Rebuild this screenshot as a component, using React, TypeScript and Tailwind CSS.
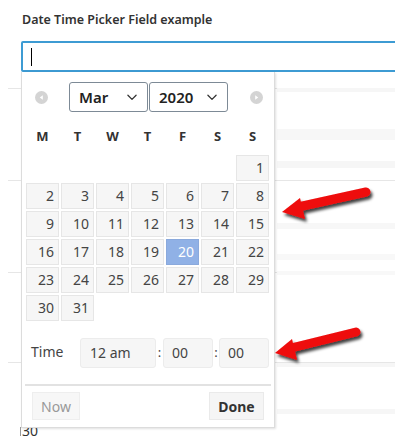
import React from "react";

const rows: (number | null)[][] = [
  [null, null, null, null, null, null, 1],
  [2, 3, 4, 5, 6, 7, 8],
  [9, 10, 11, 12, 13, 14, 15],
  [16, 17, 18, 19, 20, 21, 22],
  [23, 24, 25, 26, 27, 28, 29],
  [30, 31, null, null, null, null, null],
];

function Chevron() {
  return (
    <svg width="14" height="14" viewBox="0 0 24 24" fill="none" stroke="#333" strokeWidth="2.2" strokeLinecap="round" strokeLinejoin="round">
      <path d="M5 9l7 7 7-7" />
    </svg>
  );
}

function NavCircle({ dir }: { dir: "l" | "r" }) {
  return (
    <div className="w-[13px] h-[13px] rounded-full bg-[#d4d4d4] flex items-center justify-center">
      <svg width="7" height="7" viewBox="0 0 8 8">
        {dir === "l" ? <path d="M5.5 1.5 L2 4 L5.5 6.5 Z" fill="#fff" /> : <path d="M2.5 1.5 L6 4 L2.5 6.5 Z" fill="#fff" />}
      </svg>
    </div>
  );
}

export default function App() {
  return (
    <div className="relative w-[395px] h-[436px] overflow-hidden bg-white text-[#333]" style={{ fontFamily: '"Noto Sans", "Open Sans", Arial, sans-serif' }}>
      <div className="pt-[11px] pl-[22px] text-[12.5px] font-semibold text-[#333] h-[41px]">Date Time Picker Field example</div>
      <div className="ml-[21px] w-[380px] h-[31px] border-2 border-[#3d9bd3] rounded-[2px] flex items-center pl-[8px]">
        <div className="w-[1px] h-[18px] bg-black" />
      </div>

      {/* background content */}
      <div className="relative">
        <div className="h-[16px]" />
        <div className="ml-[8px] h-[92px] border-t border-[#e6e6e6]" />
        <div className="ml-[8px] h-[92px] border-t border-[#e6e6e6]" />
        <div className="ml-[8px] h-[90px] border-t border-[#e6e6e6]" />
        <div className="ml-[8px] h-[60px] border-t border-[#e6e6e6]" />
        <div className="absolute left-[277px] right-0 top-[16px] h-[4px] bg-[#f6f6f6]" />
        <div className="absolute left-[277px] right-0 top-[57px] h-[11px] bg-[#f7f7f7]" />
        <div className="absolute left-[277px] right-0 top-[89px] h-[7px] bg-[#f6f6f6]" />
        <div className="absolute left-[277px] right-0 top-[151px] h-[6px] bg-[#f7f7f7]" />
        <div className="absolute left-[277px] right-0 top-[182px] h-[6px] bg-[#f8f8f8]" />
        <div className="absolute left-[277px] right-0 top-[199px] h-[4px] bg-[#f8f8f8]" />
        <div className="absolute left-[277px] right-0 top-[291px] h-[4px] bg-[#f6f6f6]" />
        <div className="absolute left-[277px] right-0 top-[337px] h-[5px] bg-[#f6f6f6]" />
        <div className="absolute left-[20px] top-[355px] w-[1px] h-[20px] bg-[#999]" />
        <div className="absolute left-[22px] top-[351px] text-[14px] leading-[16px] text-[#333]">30</div>
      </div>

      {/* popup */}
      <div className="absolute left-[21px] top-[72px] w-[254px] h-[356px] bg-white border border-[#dcdcdc] border-t-0 shadow-[1px_1px_2px_rgba(0,0,0,0.12)]">
        <div className="h-[10px]" />
        <div className="flex items-center h-[30px]">
          <div className="ml-[13px] w-[34px]"><NavCircle dir="l" /></div>
          <div className="w-[79px] h-[30px] border border-[#7d8a96] rounded-[3px] flex items-center justify-between pl-[9px] pr-[8px] text-[15px] font-semibold text-[#222]">
            <span>Mar</span>
            <Chevron />
          </div>
          <div className="ml-[1px] w-[79px] h-[30px] border border-[#7d8a96] rounded-[3px] flex items-center justify-between pl-[9px] pr-[8px] text-[15px] font-semibold text-[#222]">
            <span>2020</span>
            <Chevron />
          </div>
          <div className="ml-[22px]"><NavCircle dir="r" /></div>
        </div>
        <div className="mt-[11px] ml-[4px] grid grid-cols-[repeat(7,33px)] gap-x-[2px] h-[28px] items-center text-[13px] font-bold text-[#333]">
          {["M", "T", "W", "T", "F", "S", "S"].map((d, i) => (
            <div key={i} className="text-center">{d}</div>
          ))}
        </div>
        <div className="mt-[4px] ml-[4px] grid grid-cols-[repeat(7,33px)] auto-rows-[26px] gap-x-[2px] gap-y-[2px]">
          {rows.flat().map((d, i) =>
            d === null ? (
              <div key={i} />
            ) : d === 20 ? (
              <div key={i} className="bg-[#90b1e6] border border-[#8aa9dc] text-white text-[14px] text-right pr-[4px] leading-[24px]">{d}</div>
            ) : (
              <div key={i} className="bg-[#f6f6f6] border border-[#e6e6e6] text-[#444] text-[14px] text-right pr-[4px] leading-[24px]">{d}</div>
            )
          )}
        </div>
        <div className="mt-[17px] flex items-center h-[30px] text-[14px] text-[#444]">
          <div className="ml-[9px] w-[49px] -mt-[4px]">Time</div>
          <div className="w-[76px] h-[30px] bg-[#f6f6f6] border border-[#ececec] rounded-[3px] pl-[9px] leading-[28px]">12 am</div>
          <div className="w-[7px] text-center text-[13px]">:</div>
          <div className="w-[50px] h-[30px] bg-[#f6f6f6] border border-[#ececec] rounded-[3px] pl-[8px] leading-[28px]">00</div>
          <div className="w-[6px] text-center text-[13px]">:</div>
          <div className="w-[50px] h-[30px] bg-[#f6f6f6] border border-[#ececec] rounded-[3px] pl-[8px] leading-[28px]">00</div>
        </div>
        <div className="mt-[16px] mx-[3px] h-[2px] bg-[#e2e2e2]" />
        <div className="mt-[6px] flex items-center justify-between h-[28px] px-[10px]">
          <div className="w-[48px] h-[28px] bg-[#f7f7f7] border border-[#eeeeee] flex items-center justify-center text-[14px] text-[#999]">Now</div>
          <div className="w-[55px] h-[28px] bg-[#f5f5f5] border border-[#eaeaea] flex items-center justify-center text-[14px] font-bold text-[#333]">Done</div>
        </div>
      </div>

      {/* arrows */}
      <svg className="absolute left-0 top-0 pointer-events-none" width="395" height="436" viewBox="0 0 395 436">
        <defs>
          <filter id="sh" x="-20%" y="-40%" width="140%" height="180%">
            <feDropShadow dx="2" dy="3" stdDeviation="1.6" floodColor="#000" floodOpacity="0.75" />
          </filter>
        </defs>
        <g filter="url(#sh)">
          <line x1="366" y1="192" x2="298" y2="207" stroke="#ee0a0a" strokeWidth="9" strokeLinecap="round" />
          <polygon points="282,212 300,198 305,219" fill="#ee0a0a" />
          <line x1="356" y1="332" x2="291" y2="348" stroke="#ee0a0a" strokeWidth="9" strokeLinecap="round" />
          <polygon points="275,353 292,339 297,360" fill="#ee0a0a" />
        </g>
      </svg>
    </div>
  );
}
